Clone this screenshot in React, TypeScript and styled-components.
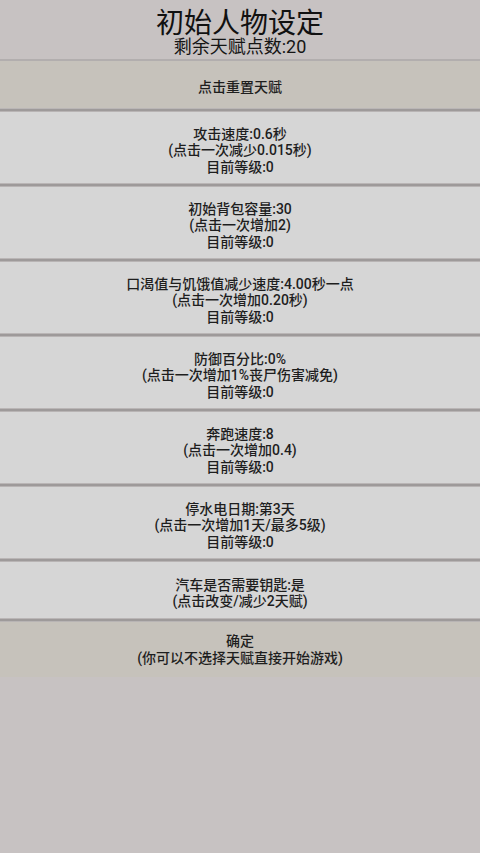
import React from "react";
import styled, { createGlobalStyle } from "styled-components";

const Global = createGlobalStyle`
  html, body {
    margin: 0;
    padding: 0;
    background: #c7c2c2;
  }
  body {
    font-family: Roboto, "Noto Sans CJK SC", sans-serif;
    color: #1c1c1c;
  }
`;

const Page = styled.div`
  width: 480px;
  min-height: 853px;
  background: #c7c2c2;
  display: flex;
  flex-direction: column;
`;

const Header = styled.div`
  height: 61px;
  box-sizing: border-box;
  border-bottom: 2px solid #b2aeae;
  padding-top: 11px;
  display: flex;
  flex-direction: column;
  align-items: center;
`;

const Title = styled.div`
  font-size: 28px;
  line-height: 26px;
  color: #111;
`;

const Subtitle = styled.div`
  font-size: 18px;
  line-height: 20px;
  color: #151515;
`;

const edge = `linear-gradient(to bottom,
  transparent 0, transparent calc(100% - 4px),
  #bab6b6 calc(100% - 4px), #bab6b6 calc(100% - 3px),
  #9e9a9a calc(100% - 3px), #9e9a9a calc(100% - 1px),
  #b8b4b4 calc(100% - 1px))`;

const Button = styled.div<{ $tone: "light" | "warm"; $h: number; $edge?: boolean }>`
  height: ${(p) => p.$h}px;
  box-sizing: border-box;
  padding-top: ${(p) => (p.$edge ? 2 : 0)}px;
  background: ${(p) => (p.$edge ? edge + "," : "")} ${(p) => (p.$tone === "warm" ? "#c6c2bb" : "#d6d6d6")};
  display: flex;
  flex-direction: column;
  align-items: center;
  justify-content: center;
  text-align: center;
  font-size: 14px;
  line-height: 16.5px;
  font-weight: 500;
  color: #1e1e1e;
  cursor: pointer;
`;

const talents: { lines: string[]; h: number }[] = [
  { lines: ["攻击速度:0.6秒", "(点击一次减少0.015秒)", "目前等级:0"], h: 75 },
  { lines: ["初始背包容量:30", "(点击一次增加2)", "目前等级:0"], h: 75 },
  { lines: ["口渴值与饥饿值减少速度:4.00秒一点", "(点击一次增加0.20秒)", "目前等级:0"], h: 75 },
  { lines: ["防御百分比:0%", "(点击一次增加1%丧尸伤害减免)", "目前等级:0"], h: 75 },
  { lines: ["奔跑速度:8", "(点击一次增加0.4)", "目前等级:0"], h: 75 },
  { lines: ["停水电日期:第3天", "(点击一次增加1天/最多5级)", "目前等级:0"], h: 75 },
  { lines: ["汽车是否需要钥匙:是", "(点击改变/减少2天赋)"], h: 60 },
];

export default function App() {
  return (
    <Page>
      <Global />
      <Header>
        <Title>初始人物设定</Title>
        <Subtitle>剩余天赋点数:20</Subtitle>
      </Header>
      <Button $tone="warm" $h={51} $edge>
        点击重置天赋
      </Button>
      {talents.map((t, i) => (
        <Button key={i} $tone="light" $h={t.h} $edge>
          {t.lines.map((l, j) => (
            <div key={j}>{l}</div>
          ))}
        </Button>
      ))}
      <Button $tone="warm" $h={55}>
        <div>确定</div>
        <div>(你可以不选择天赋直接开始游戏)</div>
      </Button>
    </Page>
  );
}
